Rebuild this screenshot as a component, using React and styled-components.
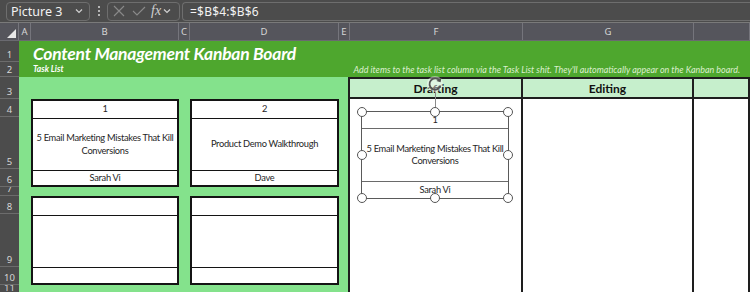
import React from 'react';
import styled, { createGlobalStyle } from 'styled-components';

const GlobalStyle = createGlobalStyle`
  html, body { margin: 0; padding: 0; background: #4c4c4c; overflow: hidden; }
  body { font-family: "Noto Sans", "Open Sans", sans-serif; }
`;

const COLS = '19px 12px 148px 11px 149px 11px 173px 171px 1fr';
const ROWS = '21px 15px 22px 18px 52px 18px 9px 18px 53px 18px 10px';

const Window = styled.div`
  width: 750px;
  height: 292px;
  display: flex;
  flex-direction: column;
  overflow: hidden;
`;

const FormulaBar = styled.div`
  height: 23px;
  flex: none;
  display: flex;
  align-items: center;
  padding: 0 0 0 6px;
  background: #4c4c4c;
  border-bottom: 1px solid #7a7a7a;
  box-sizing: border-box;
`;

const NameBox = styled.div`
  width: 84px;
  height: 19px;
  box-sizing: border-box;
  border: 1px solid #6e6e6e;
  border-radius: 4px;
  display: flex;
  align-items: center;
  justify-content: space-between;
  padding: 0 5px 0 4px;
  color: #f2f2f2;
  font-size: 12.5px;
`;

const Dots = styled.div`
  width: 17px;
  display: flex;
  flex-direction: column;
  align-items: center;
  gap: 2px;
  span { width: 2px; height: 2px; background: #d8d8d8; border-radius: 1px; }
`;

const FnBox = styled.div`
  width: 73px;
  height: 19px;
  box-sizing: border-box;
  border: 1px solid #6e6e6e;
  border-radius: 4px;
  display: flex;
  align-items: center;
  padding: 0 2px 0 4px;
`;

const Fx = styled.span`
  font-family: "Liberation Serif", serif;
  font-style: italic;
  font-size: 14px;
  color: #d0d0d0;
  margin: 0 1px 0 4px;
`;

const FormulaInput = styled.div`
  flex: 1;
  height: 19px;
  margin-left: 2px;
  box-sizing: border-box;
  border: 1px solid #6e6e6e;
  border-right: none;
  border-radius: 4px 0 0 4px;
  display: flex;
  align-items: center;
  padding-left: 7px;
  color: #f2f2f2;
  font-size: 12px;
  letter-spacing: 0.2px;
`;

const ColHeaders = styled.div`
  height: 18px;
  flex: none;
  display: grid;
  grid-template-columns: ${COLS};
  background: #55555c;
  border-bottom: 1px solid #6a6a70;
  box-sizing: border-box;
`;

const ColHead = styled.div`
  display: flex;
  align-items: center;
  justify-content: center;
  font-size: 9.5px;
  color: #d6d6d6;
  border-right: 1px solid #75757c;
`;

const Corner = styled.div`
  position: relative;
  border-right: 1px solid #75757c;
  &::after {
    content: '';
    position: absolute;
    right: 2px;
    bottom: 2px;
    border-style: solid;
    border-width: 0 0 9px 9px;
    border-color: transparent transparent #e8e8e8 transparent;
  }
`;

const Sheet = styled.div`
  flex: 1;
  display: grid;
  grid-template-columns: ${COLS};
  grid-template-rows: ${ROWS};
  background: #ffffff;
  min-height: 0;
`;

const RowHead = styled.div`
  grid-column: 1;
  grid-row: ${p => p.$row};
  background: #4c4c4c;
  border-bottom: 1px solid #6c6c6c;
  color: #d6d6d6;
  font-size: 9.5px;
  display: flex;
  align-items: flex-end;
  justify-content: center;
  line-height: 1;
  padding-bottom: 2px;
  box-sizing: border-box;
  overflow: hidden;
`;

const TitleBand = styled.div`
  grid-column: 2 / -1;
  grid-row: 1 / 3;
  background: #4ea72e;
  display: grid;
  grid-template-columns: 1fr auto;
  grid-template-rows: 21px 15px;
  padding-left: 14px;
  padding-right: 10px;
`;

const Title = styled.div`
  grid-column: 1 / -1;
  font-family: "Lato", "Noto Sans", sans-serif;
  font-weight: 700;
  font-style: italic;
  font-size: 17.5px;
  letter-spacing: -0.25px;
  color: #ffffff;
  line-height: 21px;
  padding-top: 2px;
  white-space: nowrap;
`;

const SubTitle = styled.div`
  font-family: "Lato", "Noto Sans", sans-serif;
  font-weight: 700;
  font-style: italic;
  font-size: 8.5px;
  color: #ffffff;
  line-height: 15px;
`;

const Note = styled.div`
  font-family: "Lato", "Noto Sans", sans-serif;
  font-style: italic;
  font-size: 8.95px;
  color: #dcefcf;
  line-height: 15px;
  white-space: nowrap;
`;

const TaskArea = styled.div`
  grid-column: 2 / 7;
  grid-row: 3 / -1;
  background: #84e28c;
  border-right: 2px solid #1e1e1e;
`;

const StageHead = styled.div`
  grid-column: ${p => p.$col};
  grid-row: 3;
  background: #c6efcc;
  border-top: 2px solid #1e1e1e;
  border-bottom: 2px solid #1e1e1e;
  border-right: 2px solid #1e1e1e;
  display: flex;
  align-items: flex-end;
  justify-content: center;
  font-family: "Lato", "Noto Sans", sans-serif;
  font-weight: 700;
  font-size: 12px;
  color: #111;
  padding-bottom: 1px;
`;

const StageBody = styled.div`
  grid-column: ${p => p.$col};
  grid-row: 4 / -1;
  border-right: 2px solid #1e1e1e;
  position: relative;
`;

const Card = styled.div`
  grid-column: ${p => p.$col};
  grid-row: ${p => p.$row} / span 3;
  display: grid;
  grid-template-rows: 18px 52px 1fr;
  background: #ffffff;
  border: 2px solid #141414;
  box-sizing: border-box;
  font-family: "Lato", "Noto Sans", sans-serif;
  font-size: 9.3px;
  letter-spacing: -0.3px;
  color: #262626;
  text-align: center;
`;

const CardCell = styled.div`
  display: flex;
  align-items: center;
  justify-content: center;
  padding: 0 2px;
  line-height: 12.5px;
  border-bottom: ${p => (p.$last ? 'none' : '1.5px solid #141414')};
`;

const Picture = styled.div`
  position: absolute;
  left: 11px;
  top: 12px;
  width: 148px;
  height: 88px;
  display: grid;
  grid-template-rows: 17px 53px 1fr;
  border: 1.5px solid #5a5a5a;
  box-sizing: border-box;
  background: #ffffff;
  font-family: "Lato", "Noto Sans", sans-serif;
  font-size: 9.3px;
  letter-spacing: -0.3px;
  color: #262626;
  text-align: center;
`;

const PicCell = styled.div`
  display: flex;
  align-items: center;
  justify-content: center;
  padding: 0 1px;
  line-height: 12.5px;
  border-bottom: ${p => (p.$last ? 'none' : '1px solid #6a6a6a')};
`;

const Handle = styled.span`
  position: absolute;
  left: ${p => p.$x}%;
  top: ${p => p.$y}%;
  width: 8px;
  height: 8px;
  margin: -5px 0 0 -5px;
  border: 1.3px solid #555;
  border-radius: 50%;
  background: #fff;
`;

const RotateStem = styled.span`
  position: absolute;
  left: 50%;
  top: -22px;
  width: 1px;
  height: 22px;
  background: #8a8a8a;
`;

const RotateIcon = styled.svg`
  position: absolute;
  left: 50%;
  top: -37px;
  margin-left: -9px;
`;

const Chevron = ({ color = '#d0d0d0' }) => (
  <svg width="10" height="10" viewBox="0 0 10 10">
    <path d="M2 3.5 L5 6.5 L8 3.5" fill="none" stroke={color} strokeWidth="1.2" />
  </svg>
);

const tasks = [
  { col: 3, row: 4, num: '1', title: '5 Email Marketing Mistakes That Kill Conversions', who: 'Sarah Vi' },
  { col: 5, row: 4, num: '2', title: 'Product Demo Walkthrough', who: 'Dave' },
  { col: 3, row: 8, num: '', title: '', who: '' },
  { col: 5, row: 8, num: '', title: '', who: '' },
];

const rowLabels = ['1', '2', '3', '4', '5', '6', '7', '8', '9', '10', '11'];
const colLabels = ['A', 'B', 'C', 'D', 'E', 'F', 'G', ''];

const handles = [
  [0, 0], [50, 0], [100, 0],
  [0, 50], [100, 50],
  [0, 100], [50, 100], [100, 100],
];

export default function App() {
  return (
    <>
      <GlobalStyle />
      <Window>
        <FormulaBar>
          <NameBox>
            <span>Picture 3</span>
            <Chevron />
          </NameBox>
          <Dots><span /><span /><span /></Dots>
          <FnBox>
            <svg width="14" height="14" viewBox="0 0 14 14">
              <path d="M2 2 L12 12 M12 2 L2 12" stroke="#8a8a8a" strokeWidth="1.1" />
            </svg>
            <svg width="16" height="14" viewBox="0 0 16 14" style={{ marginLeft: 5 }}>
              <path d="M2 7 L6 11 L14 3" fill="none" stroke="#8a8a8a" strokeWidth="1.1" />
            </svg>
            <Fx>fx</Fx>
            <Chevron />
          </FnBox>
          <FormulaInput>=$B$4:$B$6</FormulaInput>
        </FormulaBar>

        <ColHeaders>
          <Corner />
          {colLabels.map((c, i) => (
            <ColHead key={i}>{c}</ColHead>
          ))}
        </ColHeaders>

        <Sheet>
          {rowLabels.map((r, i) => (
            <RowHead key={r} $row={i + 1}>{r}</RowHead>
          ))}

          <TitleBand>
            <Title>Content Management Kanban Board</Title>
            <SubTitle>Task List</SubTitle>
            <Note>Add items to the task list column via the Task List shit. They'll automatically appear on the Kanban board.</Note>
          </TitleBand>

          <TaskArea />

          {tasks.map((t, i) => (
            <Card key={i} $col={t.col} $row={t.row}>
              <CardCell>{t.num}</CardCell>
              <CardCell>{t.title}</CardCell>
              <CardCell $last>{t.who}</CardCell>
            </Card>
          ))}

          <StageHead $col={7}>Drafting</StageHead>
          <StageHead $col={8}>Editing</StageHead>
          <StageHead $col={9} />

          <StageBody $col={7}>
            <Picture>
              <PicCell>1</PicCell>
              <PicCell>5 Email Marketing Mistakes That Kill Conversions</PicCell>
              <PicCell $last>Sarah Vi</PicCell>
              <RotateStem />
              <RotateIcon width="18" height="18" viewBox="0 0 18 18">
                <circle cx="9" cy="9" r="8" fill="#ffffff" fillOpacity="0.45" />
                <path d="M13.6 5.6 A5.6 5.6 0 1 0 14.5 10.5" fill="none" stroke="#555" strokeWidth="1.8" />
                <path d="M15.4 2.6 L14.6 7.2 L10.4 6 Z" fill="#555" />
              </RotateIcon>
              {handles.map(([x, y], i) => (
                <Handle key={i} $x={x} $y={y} />
              ))}
            </Picture>
          </StageBody>
          <StageBody $col={8} />
          <StageBody $col={9} />
        </Sheet>
      </Window>
    </>
  );
}
